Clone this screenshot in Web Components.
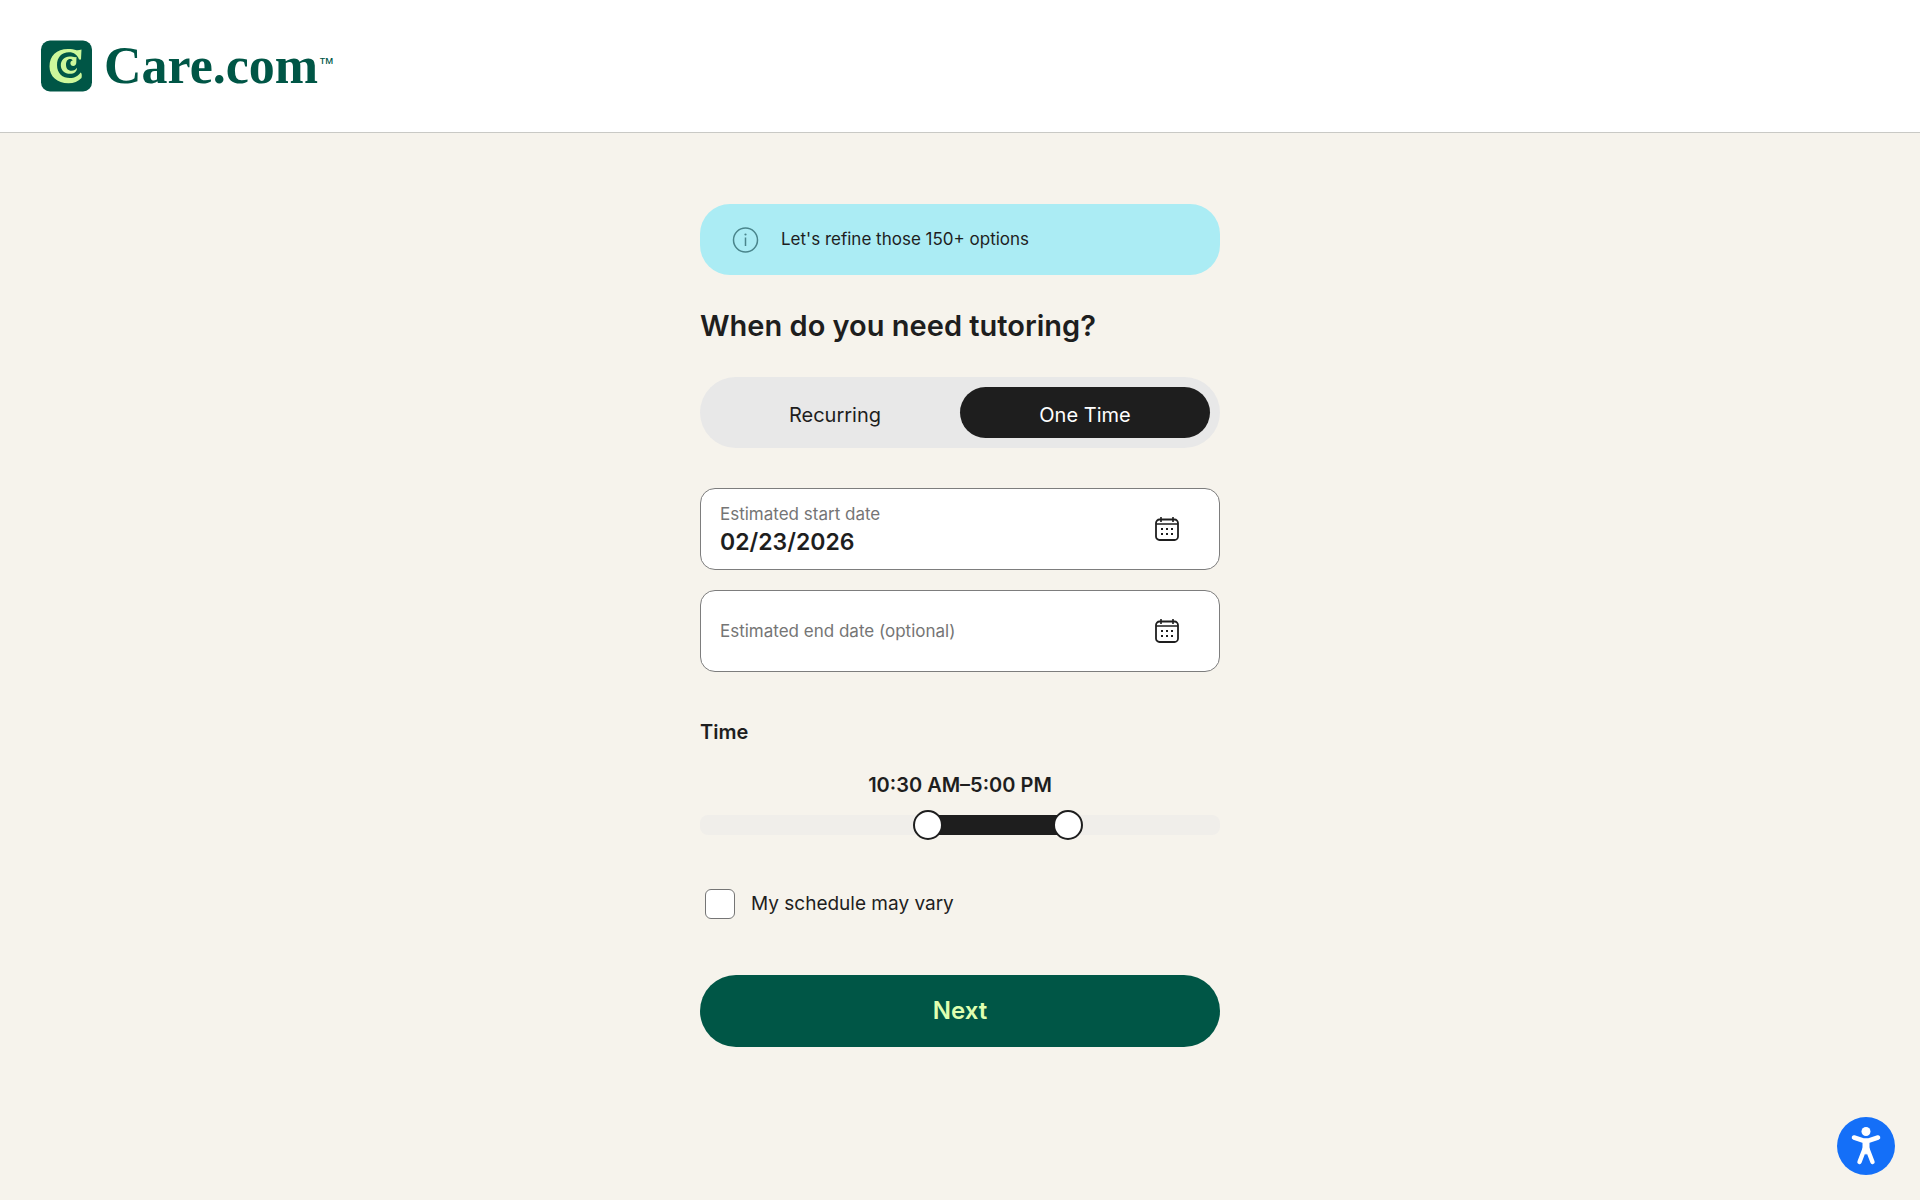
<!DOCTYPE html>
<html lang="en">
<head>
<meta charset="utf-8">
<meta name="viewport" content="width=device-width, initial-scale=1">
<title>Care.com</title>
<style>
  :root {
    --green: #005646;
    --lime: #dfffb0;
    --ink: #1e1e1e;
    --grey: #757575;
    --sand: #f6f3ec;
  }
  body {
    margin: 0;
    min-height: 100vh;
    background: var(--sand);
    color: var(--ink);
    font-family: Inter, "Liberation Sans", sans-serif;
    font-size: 20px;
    line-height: 24px;
  }
  .dates {
    display: grid;
    gap: 20px;
  }
</style>
</head>
<body>
<site-header></site-header>
<booking-form>
  <info-banner slot="banner">Let's refine those 150+ options</info-banner>
  <span slot="title">When do you need tutoring?</span>
  <segment-toggle></segment-toggle>
  <div class="dates">
    <date-field label="Estimated start date" value="02/23/2026"></date-field>
    <date-field label="Estimated end date (optional)"></date-field>
  </div>
  <time-range start="10.5" end="17"></time-range>
  <check-option>My schedule may vary</check-option>
  <primary-button>Next</primary-button>
</booking-form>
<access-button></access-button>

<script>
// attaches an open shadow root with the given markup
class BaseElement extends HTMLElement {
  render(html) {
    const template = document.createElement('template');
    template.innerHTML = html;
    this.attachShadow({ mode: 'open' });
    this.shadowRoot.appendChild(template.content.cloneNode(true));
  }
}

class SiteHeader extends BaseElement {
  constructor() {
    super();
    this.render(`
<style>
:host {
  display: block;
  background: white;
  border-bottom: 1px solid #c9c9c5;
}
header {
  padding: 40px;
}
a {
  display: inline-flex;
  align-items: center;
  color: var(--green);
  text-decoration: none;
  vertical-align: top;
}
.mark {
  width: 52px;
  height: 52px;
  margin-right: 12px;
}
.word {
  font: bold 52px/52px "Liberation Serif", serif;
}
.tm {
  align-self: flex-start;
  font: 16px/48px "Liberation Sans", sans-serif;
}
</style>
<header>
  <a href="#" aria-label="Care.com">
    <svg class="mark" viewBox="0 0 52 52" aria-hidden="true">
      <rect x="1" y="0.500" width="51" height="51" rx="9" fill="#005646"/>
      <path fill="#cdf79b" d="M41.500 9.500L41 19.500H39C37.500 15 34 12.300 29 12.300C21.500 12.300 17 17.500 17 25C17 33.500 22.500 38 30 38C34.500 38 38.500 36 40.500 32.500C42 33 42 36 41.500 38C38 41.500 34 43.200 28.500 43.200C17 43.200 9.500 36.500 9.500 26.500C9.500 16 16.500 9 28 9C31.500 9 34 9.500 36.500 10.200C38 10.500 39.500 10 41.500 9.500Z"/>
      <path fill="#cdf79b" d="M29.500 16.500C32.500 16.500 34.500 17.500 36.500 17L36.300 22.500C36.300 24.700 35 26 33.200 26C31.500 26 30.400 24.800 30.400 23.200C30.400 21.500 31.500 20.700 32.700 20.500C32 19.500 31 19.100 30 19.100C27.500 19.100 26 21.500 26 24.800C26 28.500 28 30.800 31.500 30.800C34 30.800 35.700 29.500 37 27.700C37.300 31.500 34 33.800 30 33.800C24.800 33.800 20.800 30.300 20.800 25.200C20.800 20 24.500 16.500 29.500 16.500Z"/>
    </svg>
    <span class="word">Care.com</span><span class="tm">™</span>
  </a>
</header>`);
  }
}

class InfoBanner extends BaseElement {
  constructor() {
    super();
    this.render(`
<style>
:host {
  display: flex;
  align-items: center;
  gap: 21px;
  padding: 24px 32px;
  border-radius: 30px;
  background: #abecf4;
  font-size: 17px;
  line-height: 23px;
}
svg {
  width: 28px;
  height: 28px;
  margin: -4px 0;
}
</style>
<svg viewBox="0 0 28 28" fill="none" stroke="#4a858c" stroke-width="1.500" aria-hidden="true">
  <circle cx="13.500" cy="14" r="12"/>
  <path d="M13.500 11.500v8.500"/>
  <circle cx="13.500" cy="8.500" r="1.100" fill="#4a858c" stroke="none"/>
</svg>
<span><slot></slot></span>`);
  }
}

class BookingForm extends BaseElement {
  constructor() {
    super();
    this.render(`
<style>
:host {
  display: block;
  padding: 71px 20px;
}
form {
  display: flex;
  flex-direction: column;
  max-width: 520px;
  margin: 0 auto;
}
h1 {
  margin: 32px 0;
  font-size: 29px;
  font-weight: 600;
  line-height: 38px;
}
.fields {
  display: flex;
  flex-direction: column;
  gap: 40px;
}
</style>
<form>
  <slot name="banner"></slot>
  <h1><slot name="title"></slot></h1>
  <div class="fields"><slot></slot></div>
</form>`);
  }
}

class SegmentToggle extends BaseElement {
  constructor() {
    super();
    this.render(`
<style>
:host {
  display: flex;
  padding: 10px;
  border-radius: 36px;
  background: #e8e8e8;
}
button {
  flex: 1;
  height: 51px;
  padding: 4px 0 0;
  border: 0;
  border-radius: 26px;
  background: none;
  color: var(--ink);
  font: inherit;
  cursor: pointer;
}
button[aria-pressed="true"] {
  background: var(--ink);
  color: white;
}
</style>
<button type="button" aria-pressed="false">Recurring</button>
<button type="button" aria-pressed="true">One Time</button>`);
  }

  connectedCallback() {
    const buttons = this.shadowRoot.querySelectorAll('button');
    buttons.forEach((button) => {
      button.addEventListener('click', () => {
        buttons.forEach((b) => b.setAttribute('aria-pressed', b === button));
      });
    });
  }
}

class DateField extends BaseElement {
  constructor() {
    super();
    this.render(`
<style>
:host {
  display: block;
}
.box {
  display: grid;
  grid-template-columns: 1fr auto;
  align-items: center;
  border: 1px solid #7d7d7d;
  border-radius: 15px;
  background: white;
}
label, input {
  grid-area: 1 / 1;
}
label {
  padding-left: 19px;
  color: var(--grey);
  font-size: 17px;
  pointer-events: none;
}
input {
  box-sizing: border-box;
  width: 100%;
  height: 80px;
  padding: 25px 0 0 19px;
  border: 0;
  outline: 0;
  background: none;
  color: var(--ink);
  font: 600 23px/28px Inter, sans-serif;
}
.filled label {
  padding-bottom: 30px;
}
button {
  display: flex;
  margin-right: 36px;
  padding: 4px;
  border: 0;
  background: none;
  color: var(--ink);
  cursor: pointer;
}
svg {
  width: 24px;
  height: 24px;
}
</style>
<div class="box">
  <input id="date" type="text" autocomplete="off">
  <label for="date"></label>
  <button type="button" aria-label="Open calendar">
    <svg viewBox="0 0 24 24" fill="none" stroke="currentColor" aria-hidden="true">
      <rect x="1" y="2.500" width="22" height="20.500" rx="3.500" stroke-width="1.800"/>
      <path d="M1 7h22M6 0v5M18 0v5" stroke-width="1.600"/>
      <path d="M6 12h2M11 12h2M16 12h2M6 17h2M11 17h2M16 17h2" stroke-width="2"/>
    </svg>
  </button>
</div>`);
  }

  connectedCallback() {
    const box = this.shadowRoot.querySelector('.box');
    const input = this.shadowRoot.querySelector('input');
    this.shadowRoot.querySelector('label').textContent = this.getAttribute('label');
    input.value = this.getAttribute('value') || '';
    const update = () => box.classList.toggle('filled', input.value !== '');
    input.addEventListener('input', update);
    update();
  }
}

class TimeRange extends BaseElement {
  constructor() {
    super();
    this.render(`
<style>
:host {
  display: block;
  font-weight: 600;
}
h2 {
  margin: 8px 0 29px;
  font: inherit;
}
output {
  display: block;
  text-align: center;
}
.slider {
  display: grid;
  align-items: center;
  margin-top: 12px;
}
.track, input {
  grid-area: 1 / 1;
}
.track {
  height: 20px;
  border-radius: 8px;
  background: linear-gradient(to right,
    #f0eeea var(--from), var(--ink) var(--from) var(--to), #f0eeea var(--to));
}
input {
  appearance: none;
  height: 32px;
  /* half a thumb over each end, so its centre sits on the value */
  margin: 0 -15px;
  background: none;
  pointer-events: none;
}
input::-webkit-slider-thumb {
  appearance: none;
  box-sizing: border-box;
  width: 30px;
  height: 30px;
  border: 2px solid var(--ink);
  border-radius: 50%;
  background: white;
  pointer-events: auto;
}
</style>
<h2>Time</h2>
<output></output>
<div class="slider">
  <div class="track"></div>
  <input class="start" type="range" min="0" max="24" step="0.5" aria-label="Start time">
  <input class="end" type="range" min="0" max="24" step="0.5" aria-label="End time">
</div>`);
  }

  format(value) {
    const hour = Math.floor(value) % 12 || 12;
    const minutes = value % 1 ? '30' : '00';
    return `${hour}:${minutes} ${value % 24 < 12 ? 'AM' : 'PM'}`;
  }

  connectedCallback() {
    const start = this.shadowRoot.querySelector('.start');
    const end = this.shadowRoot.querySelector('.end');
    const track = this.shadowRoot.querySelector('.track');
    start.value = this.getAttribute('start');
    end.value = this.getAttribute('end');
    const update = () => {
      const from = Number(start.value);
      const to = Number(end.value);
      this.shadowRoot.querySelector('output').textContent = `${this.format(from)}–${this.format(to)}`;
      track.style.setProperty('--from', `${(from / 24) * 100}%`);
      track.style.setProperty('--to', `${(to / 24) * 100}%`);
    };
    start.addEventListener('input', update);
    end.addEventListener('input', update);
    update();
  }
}

class CheckOption extends BaseElement {
  constructor() {
    super();
    this.render(`
<style>
:host {
  display: block;
  font-size: 19px;
}
label {
  display: flex;
  align-items: center;
  gap: 16px;
  padding: 8px 5px;
}
input {
  appearance: none;
  box-sizing: border-box;
  width: 30px;
  height: 30px;
  margin: 0;
  border: 1px solid #757575;
  border-radius: 6px;
  background: white;
}
input:checked {
  background: var(--green);
}
</style>
<label><input type="checkbox"><span><slot></slot></span></label>`);
  }
}

class PrimaryButton extends BaseElement {
  constructor() {
    super();
    this.render(`
<style>
:host {
  display: block;
  margin-top: 8px;
}
button {
  width: 100%;
  height: 72px;
  padding: 0;
  border: 0;
  border-radius: 36px;
  background: var(--green);
  color: var(--lime);
  font: 600 24px/32px Inter, sans-serif;
  cursor: pointer;
}
</style>
<button type="button"><slot></slot></button>`);
  }
}

class AccessButton extends BaseElement {
  constructor() {
    super();
    this.render(`
<style>
:host {
  position: fixed;
  right: 25px;
  bottom: 25px;
}
button {
  display: block;
  width: 58px;
  height: 58px;
  padding: 0;
  border: 0;
  border-radius: 50%;
  background: #146ff8;
  cursor: pointer;
}
svg {
  display: block;
}
</style>
<button type="button" aria-label="Accessibility options">
  <svg viewBox="0 0 58 58" fill="white" aria-hidden="true">
    <circle cx="29" cy="14.500" r="4.500"/>
    <path d="M17 20.500L26 23.500H32L41 20.500" fill="none" stroke="white" stroke-width="4.600" stroke-linecap="round" stroke-linejoin="round"/>
    <path d="M25.500 23H32.500V33L29 38L25.500 33Z"/>
    <path d="M27.500 32L22.500 45M30.500 32L35.500 45" fill="none" stroke="white" stroke-width="4.400" stroke-linecap="round"/>
  </svg>
</button>`);
  }
}

customElements.define('site-header', SiteHeader);
customElements.define('info-banner', InfoBanner);
customElements.define('booking-form', BookingForm);
customElements.define('segment-toggle', SegmentToggle);
customElements.define('date-field', DateField);
customElements.define('time-range', TimeRange);
customElements.define('check-option', CheckOption);
customElements.define('primary-button', PrimaryButton);
customElements.define('access-button', AccessButton);
</script>
</body>
</html>
